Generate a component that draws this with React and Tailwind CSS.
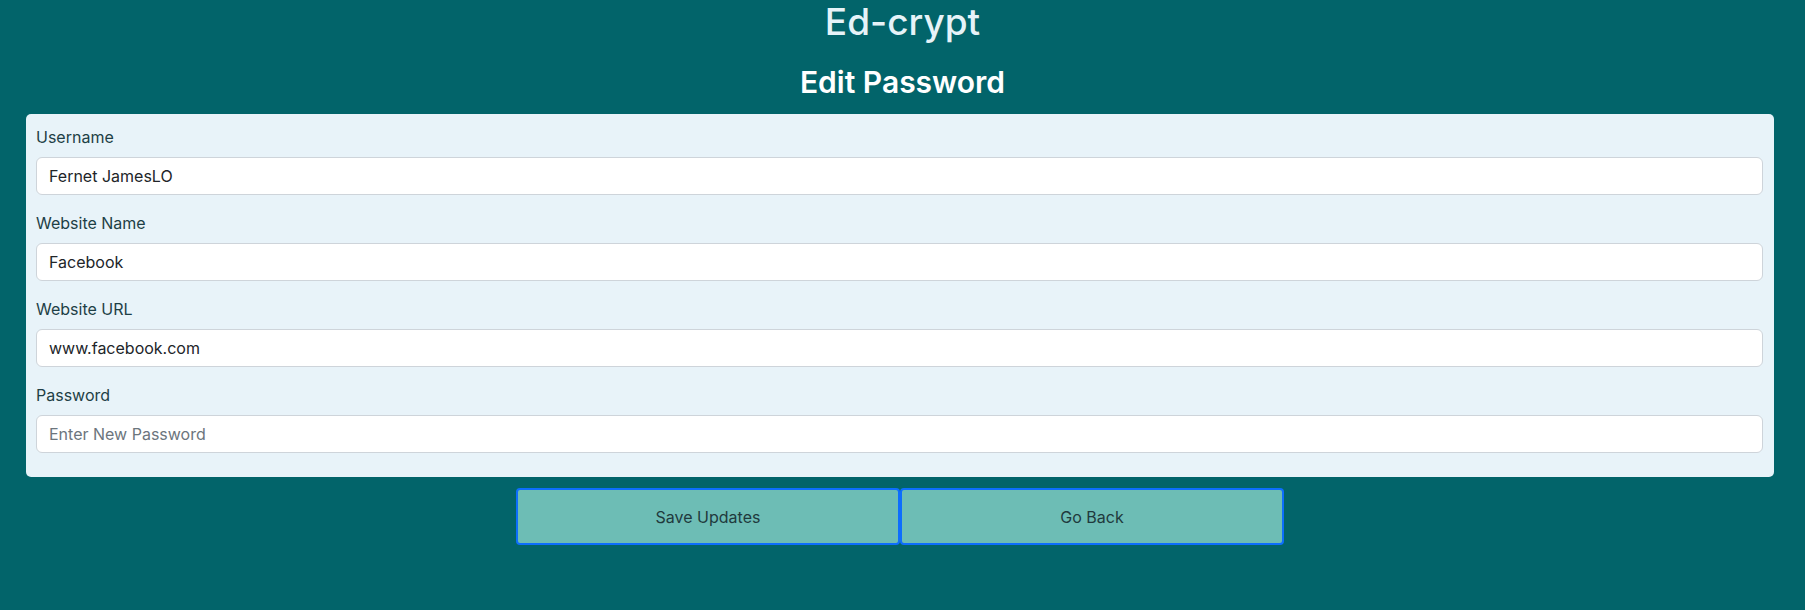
import React, { useState } from "react";

const fields = [
    { label: "Username", value: "Fernet JamesLO", placeholder: "" },
    { label: "Website Name", value: "Facebook", placeholder: "" },
    { label: "Website URL", value: "www.facebook.com", placeholder: "" },
    { label: "Password", value: "", placeholder: "Enter New Password" },
];

export default function App() {
    const [values, setValues] = useState(fields.map((f) => f.value));

    return (
        <div className="min-h-screen w-full bg-[#02646a] font-['Inter','Liberation_Sans',sans-serif]">
            <h1 className="text-center text-[37px] leading-[44px] font-medium text-[#e6f3f8]">Ed-crypt</h1>
            <h2 className="mt-[19px] text-center text-[30px] leading-[38px] font-semibold text-white">Edit Password</h2>

            <div className="mt-[13px] pl-[26px] pr-[31px]">
                <div className="rounded-[5px] bg-[#e8f3f9] pt-[11px] pb-[8px] pl-[10px] pr-[11px]">
                    {fields.map((f, i) => (
                        <div key={f.label} className="mb-4">
                            <label className="mb-2 block text-[16px] leading-6 text-[#1e3f46]">{f.label}</label>
                            <input
                                type="text"
                                value={values[i]}
                                placeholder={f.placeholder}
                                onChange={(e) => setValues(values.map((v, j) => (j === i ? e.target.value : v)))}
                                className="block h-[38px] w-full rounded-[6px] border border-[#ced4da] bg-white px-3 text-[16px] text-[#212529] placeholder:text-[#6c757d] outline-none"
                            />
                        </div>
                    ))}
                </div>

                <div className="mt-[11px] flex justify-center">
                    <button className="h-[57px] w-[384px] rounded-[4px] border-2 border-[#0d6efd] bg-[#6dbdb5] text-[16px] text-[#1f3a3d]">
                        Save Updates
                    </button>
                    <button className="h-[57px] w-[384px] rounded-[4px] border-2 border-[#0d6efd] bg-[#6dbdb5] text-[16px] text-[#1f3a3d]">
                        Go Back
                    </button>
                </div>
            </div>
        </div>
    );
}
